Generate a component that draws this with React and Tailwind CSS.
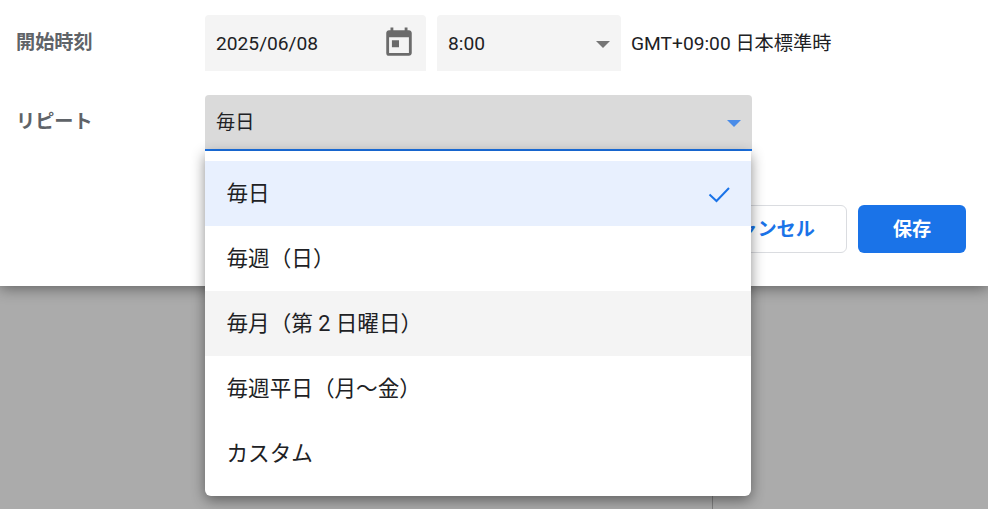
import React from "react";

const options = ["毎日", "毎週（日）", "毎月（第 2 日曜日）", "毎週平日（月〜金）", "カスタム"];

function CalendarIcon() {
  return (
    <svg width="34" height="34" viewBox="0 0 24 24" fill="#6b6b6b">
      <path d="M19 3h-1V1h-2v2H8V1H6v2H5c-1.11 0-2 .9-2 2v14a2 2 0 0 0 2 2h14c1.1 0 2-.9 2-2V5c0-1.1-.9-2-2-2zm0 16H5V8h14v11zM7 10h5v5H7z" />
    </svg>
  );
}

function Caret({ className }) {
  return <span className={`w-0 h-0 border-x-[7px] border-x-transparent border-t-[7px] ${className}`}></span>;
}

function Option({ label, selected, hover }) {
  let bg = "bg-white";
  if (selected) bg = "bg-[#e8f0fe]";
  if (hover) bg = "bg-[#f4f4f4]";
  return (
    <div className={`h-[65px] flex items-center justify-between pl-[21.5px] pr-[20px] text-[21.6px] text-[#202124] ${bg}`}>
      <span className="pt-[2px]">{label}</span>
      {selected && (
        <svg width="24" height="24" viewBox="0 0 24 24" fill="none" stroke="#1a73e8" strokeWidth="2">
          <path d="M2.5 12.5l7 6.5L22 6" />
        </svg>
      )}
    </div>
  );
}

export default function App() {
  return (
    <div className="h-screen flex flex-col overflow-hidden bg-[#ababab] font-['Roboto','Noto_Sans_CJK_JP',sans-serif]">
      <div className="h-[286px] shrink-0 bg-white shadow-[0_2px_14px_rgba(0,0,0,0.45)] relative z-10 pl-4 pr-[22px] pt-[15px]">
        <div className="flex items-start">
          <div className="w-[189px] pt-[14px] text-[19.2px] font-bold text-[#5f6368]">開始時刻</div>
          <div className="w-[221px] h-14 bg-[#f4f4f4] rounded-t flex items-center justify-between pl-[11px] pr-[10px] text-[19.2px] text-[#202124]">
            <span className="pt-[2px]">2025/06/08</span>
            <CalendarIcon />
          </div>
          <div className="w-[184px] h-14 ml-[11px] bg-[#f4f4f4] rounded-t flex items-center justify-between pl-[11px] pr-[11px] text-[19.2px] text-[#202124]">
            <span className="pt-[2px]">8:00</span>
            <Caret className="mt-[2px] border-t-[#757575]" />
          </div>
          <div className="ml-[10px] h-14 pt-[2px] flex items-center text-[19.2px] text-[#202124]">GMT+09:00 日本標準時</div>
        </div>
        <div className="flex items-start mt-6">
          <div className="w-[189px] pt-[13px] text-[19.2px] font-bold text-[#5f6368]">リピート</div>
          <div className="relative w-[547px]">
            <div className="h-14 bg-[#dadada] rounded-t border-b-2 border-[#1a73e8] flex items-center justify-between pl-[11px] pr-[11px] text-[19.2px] text-[#202124]">
              <span className="pt-[3px]">毎日</span>
              <Caret className="mt-[3px] border-t-[#4a8ce8]" />
            </div>
            <div className="absolute left-0 top-14 w-[546px] bg-white rounded-b-md py-[10px] shadow-[0_4px_14px_rgba(0,0,0,0.45)]">
              {options.map((o, i) => (
                <Option key={o} label={o} selected={i === 0} hover={i === 2} />
              ))}
            </div>
          </div>
        </div>
        <div className="flex justify-end gap-[11px] mt-[54px] text-[19.2px] font-bold">
          <button className="h-12 pt-[3px] pl-9 pr-[31px] rounded-md border border-[#dadce0] bg-white text-[#1a73e8]">キャンセル</button>
          <button className="h-12 pt-[3px] w-[108px] rounded-md bg-[#1a73e8] text-white">保存</button>
        </div>
      </div>
      <div className="flex-1 flex">
        <div className="w-[713px] border-r border-[#808080]"></div>
      </div>
    </div>
  );
}
